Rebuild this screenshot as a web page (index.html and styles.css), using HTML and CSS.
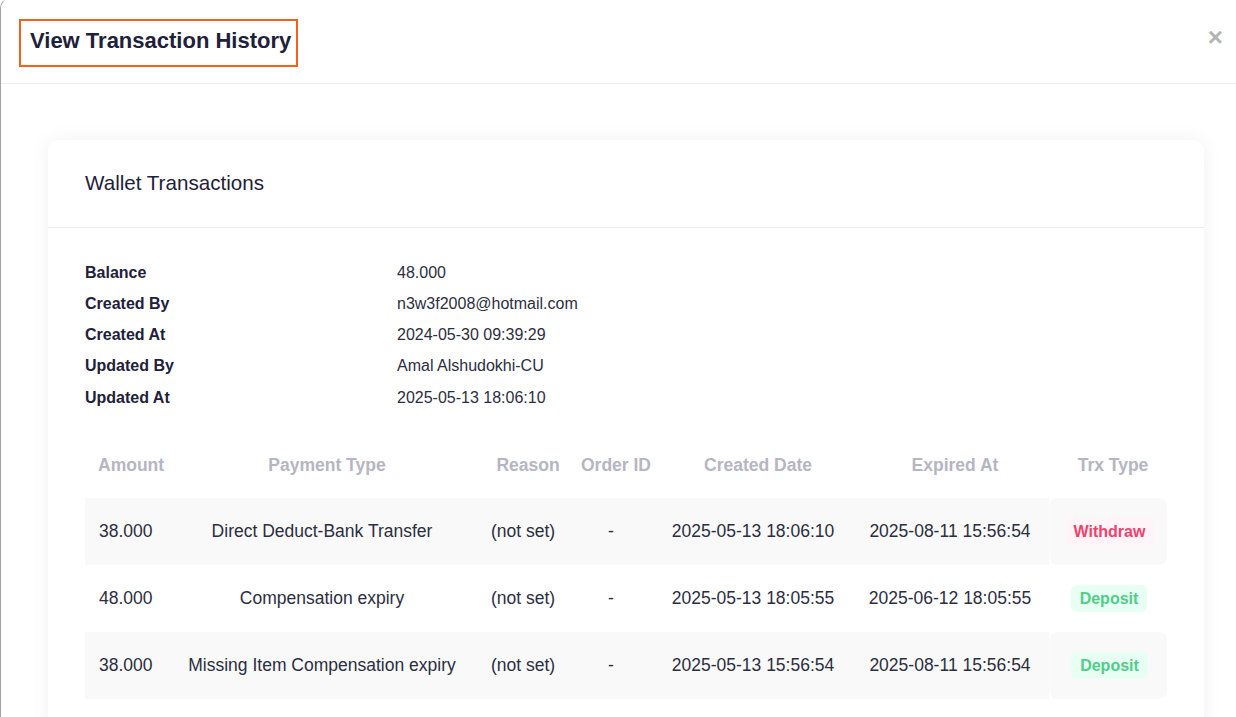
FILE: index.html
```html
<!DOCTYPE html>
<html lang="en">
<head>
    <meta charset="UTF-8">
    <meta name="viewport" content="width=device-width, initial-scale=1.0">
    <title>View Transaction History</title>
    <link rel="stylesheet" href="styles.css">
</head>
<body>
    <div class="modal">
        <div class="modal-header">
            <h2 class="modal-title">View Transaction History</h2>
            <span class="close">&times;</span>
        </div>
        <div class="modal-body">
            <div class="card">
                <div class="card-header">Wallet Transactions</div>
                <div class="card-body">
                    <div class="details">
                        <div class="label">Balance</div><div class="value">48.000</div>
                        <div class="label">Created By</div><div class="value">n3w3f2008@hotmail.com</div>
                        <div class="label">Created At</div><div class="value">2024-05-30 09:39:29</div>
                        <div class="label">Updated By</div><div class="value">Amal Alshudokhi-CU</div>
                        <div class="label">Updated At</div><div class="value">2025-05-13 18:06:10</div>
                    </div>

                    <div class="trx-table">
                        <div class="trx-row trx-head">
                            <div class="cell first">Amount</div>
                            <div class="cell">Payment Type</div>
                            <div class="cell reason">Reason</div>
                            <div class="cell">Order ID</div>
                            <div class="cell">Created Date</div>
                            <div class="cell">Expired At</div>
                            <div class="cell last">Trx Type</div>
                        </div>
                        <div class="trx-row striped">
                            <div class="cell first">38.000</div>
                            <div class="cell">Direct Deduct-Bank Transfer</div>
                            <div class="cell reason">(not set)</div>
                            <div class="cell">-</div>
                            <div class="cell">2025-05-13 18:06:10</div>
                            <div class="cell">2025-08-11 15:56:54</div>
                            <div class="cell last"><span class="badge withdraw">Withdraw</span></div>
                        </div>
                        <div class="trx-row">
                            <div class="cell first">48.000</div>
                            <div class="cell">Compensation expiry</div>
                            <div class="cell reason">(not set)</div>
                            <div class="cell">-</div>
                            <div class="cell">2025-05-13 18:05:55</div>
                            <div class="cell">2025-06-12 18:05:55</div>
                            <div class="cell last"><span class="badge deposit">Deposit</span></div>
                        </div>
                        <div class="trx-row striped">
                            <div class="cell first">38.000</div>
                            <div class="cell">Missing Item Compensation expiry</div>
                            <div class="cell reason">(not set)</div>
                            <div class="cell">-</div>
                            <div class="cell">2025-05-13 15:56:54</div>
                            <div class="cell">2025-08-11 15:56:54</div>
                            <div class="cell last"><span class="badge deposit">Deposit</span></div>
                        </div>
                    </div>
                </div>
            </div>
        </div>
    </div>
</body>
</html>
```

FILE: styles.css
```css
body {
    font-family: "Liberation Sans", Arial, sans-serif;
    background-color: #fff;
    color: #1e2139;
    margin: 0;
    padding: 0;
    overflow: hidden;
}
.modal {
    height: 740px;
    margin-top: -2px;
    border-left: 1px solid #a3a3a3;
    border-top: 1px solid #e6e6e6;
    border-top-left-radius: 10px;
    background: #fff;
}
.modal-header {
    display: flex;
    justify-content: space-between;
    align-items: flex-start;
    height: 85px;
    box-sizing: border-box;
    padding: 20px 13px 0 18px;
    border-bottom: 1px solid #eeeef1;
}
.modal-title {
    margin: 0;
    padding: 7px 5px 12px 9px;
    border: 2px solid #f5601a;
    font-size: 22px;
    font-weight: bold;
    line-height: 25px;
    color: #1e2139;
}
.close {
    margin-top: 5px;
    font-size: 26px;
    font-weight: bold;
    line-height: 26px;
    color: #b4b4b4;
}
.modal-body {
    padding: 56px 32px 0 47px;
}
.card {
    background: #fff;
    border-radius: 10px;
    box-shadow: 0 0 20px rgba(0, 0, 0, 0.06);
}
.card-header {
    height: 88px;
    box-sizing: border-box;
    padding: 31px 37px 0;
    font-size: 20.6px;
    line-height: 24px;
    color: #1e2139;
    border-bottom: 1px solid #eeeef1;
}
.card-body {
    padding: 29px 37px 40px;
}
.details {
    display: grid;
    grid-template-columns: 312px 1fr;
    grid-auto-rows: 31.25px;
    align-items: center;
    font-size: 16px;
}
.details .label {
    font-weight: bold;
    color: #1e2139;
}
.details .value {
    color: #2b2e3f;
}
.trx-table {
    margin-top: 20px;
    font-size: 17.5px;
}
.trx-row {
    display: grid;
    grid-template-columns: 100px 284px 108px 78px 206px 188px 118px;
    height: 67px;
    color: #2b2e3f;
}
.trx-row .cell {
    display: flex;
    align-items: center;
    justify-content: center;
    white-space: nowrap;
    padding-right: 10px;
}
.trx-row .cell.first {
    justify-content: flex-start;
    padding-left: 14px;
    padding-right: 0;
}
.trx-row .cell.reason {
    padding-right: 0;
}
.trx-row .cell.last {
    padding-left: 2px;
    padding-right: 0;
    border-radius: 8px;
}
.trx-head {
    height: 65px;
    font-weight: bold;
    color: #b5b5c3;
}
.trx-head .cell {
    padding-right: 0;
}
.trx-head .cell.reason {
    padding-left: 10px;
}
.trx-head .cell.first {
    padding-left: 13px;
}
.trx-head .cell.last {
    padding-left: 10px;
}
.trx-row.striped .cell {
    background: #f9f9f9;
}
.trx-row.striped .cell.last {
    border-left: 1px solid #fcfcfc;
}
.badge {
    padding: 4px 9px;
    border-radius: 6px;
    font-size: 16px;
    font-weight: bold;
    line-height: 19px;
}
.badge.withdraw {
    background: #fff5f8;
    color: #f1416c;
}
.badge.deposit {
    background: #e8fff3;
    color: #50cd89;
}
```
